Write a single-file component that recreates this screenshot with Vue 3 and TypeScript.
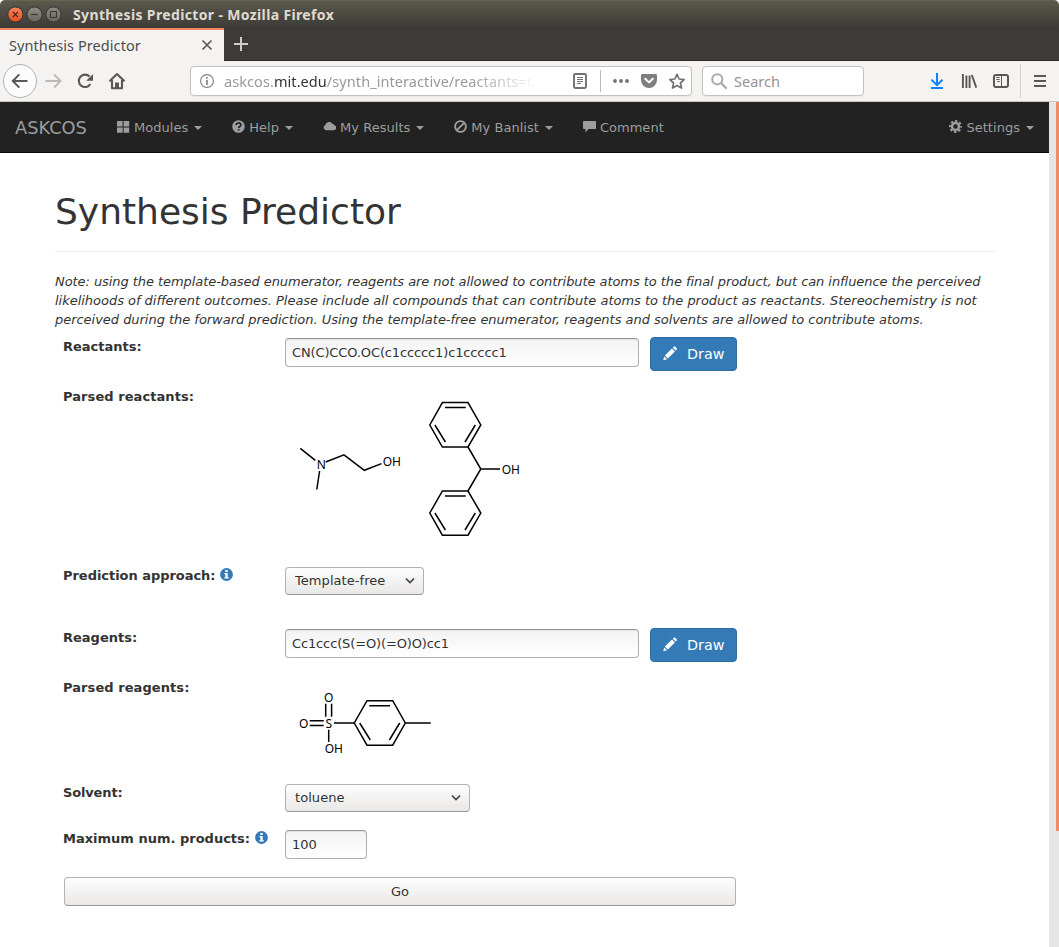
<script setup lang="ts">
import { ref } from 'vue'

type IconName = 'modules' | 'help' | 'results' | 'banlist' | 'comment'

interface NavItem {
  label: string
  icon: IconName
  menu: boolean
}

const navItems: NavItem[] = [
  { label: 'Modules', icon: 'modules', menu: true },
  { label: 'Help', icon: 'help', menu: true },
  { label: 'My Results', icon: 'results', menu: true },
  { label: 'My Banlist', icon: 'banlist', menu: true },
  { label: 'Comment', icon: 'comment', menu: false },
]

const reactants = ref<string>('CN(C)CCO.OC(c1ccccc1)c1ccccc1')
const reagents = ref<string>('Cc1ccc(S(=O)(=O)O)cc1')
const approach = ref<string>('Template-free')
const solvent = ref<string>('toluene')
const maxProducts = ref<string>('100')
</script>

<template>
  <div class="window">
    <div class="titlebar">
      <svg class="controls" width="66" height="28" viewBox="0 0 66 28">
        <defs>
          <linearGradient id="gClose" x1="0" y1="0" x2="0" y2="1">
            <stop offset="0" stop-color="#f68560" /><stop offset="1" stop-color="#df4d1f" />
          </linearGradient>
          <linearGradient id="gBtn" x1="0" y1="0" x2="0" y2="1">
            <stop offset="0" stop-color="#8f8d84" /><stop offset="1" stop-color="#67655e" />
          </linearGradient>
        </defs>
        <circle cx="15.4" cy="14.5" r="7.6" fill="url(#gClose)" stroke="#34332e" />
        <path d="M12.8 11.9l5.2 5.2M18 11.9l-5.2 5.2" stroke="#4b2415" stroke-width="1.3" />
        <circle cx="34.5" cy="14.5" r="7.6" fill="url(#gBtn)" stroke="#34332e" />
        <path d="M31 14.5h7" stroke="#3a3934" stroke-width="1.2" />
        <circle cx="53.5" cy="14.5" r="7.6" fill="url(#gBtn)" stroke="#34332e" />
        <rect x="50.5" y="11.5" width="6" height="6" fill="none" stroke="#3a3934" stroke-width="1.1" />
      </svg>
      <span class="window-title">Synthesis Predictor - Mozilla Firefox</span>
    </div>

    <div class="tabbar">
      <div class="tab">
        <span class="tab-title">Synthesis Predictor</span>
        <svg width="12" height="12" viewBox="0 0 12 12"><path d="M1.5 1.5l9 9M10.5 1.5l-9 9" stroke="#5c5b59" stroke-width="1.7" /></svg>
      </div>
      <svg class="new-tab" width="16" height="16" viewBox="0 0 16 16"><path d="M8 1v14M1 8h14" stroke="#d0cdc8" stroke-width="2" /></svg>
    </div>

    <div class="toolbar">
      <svg class="nav-buttons" width="190" height="40" viewBox="0 61 190 40" fill="none">
        <circle cx="20" cy="81" r="16.5" fill="#fcfcfc" stroke="#b3b1af" />
        <path d="M27.5 81H13M19.3 74.4L12.8 81l6.5 6.6" stroke="#595856" stroke-width="2" />
        <path d="M45.5 81h14.5M54 74.4l6.5 6.6-6.5 6.6" stroke="#bcbab8" stroke-width="2" />
        <path d="M89.5 76.5A6.2 6.2 0 1 0 90.4 84" stroke="#595856" stroke-width="2.1" />
        <path d="M93 74v6.8h-6.8z" fill="#595856" />
        <path d="M109.5 81.3l7.5-7.3 7.5 7.3M112 80v8.2h10V80" stroke="#595856" stroke-width="2.1" stroke-linejoin="round" />
        <path d="M115 88v-5.5h4V88z" fill="#595856" />
      </svg>
      <div class="urlbar">
        <svg class="info-icon" width="14" height="14" viewBox="0 0 14 14" fill="none">
          <circle cx="7" cy="7" r="6.4" stroke="#807f7d" stroke-width="1.1" />
          <path d="M7 6v5M7 3v1.8" stroke="#807f7d" stroke-width="1.6" />
        </svg>
        <span class="url">askcos.<b>mit.edu</b>/synth_interactive/reactants=C</span>
        <svg class="url-icons" width="118" height="28" viewBox="572 67 118 28" fill="none">
          <rect x="574" y="74" width="12" height="14" rx="1.2" stroke="#737271" stroke-width="1.9" />
          <path d="M577 77.5h6M577 79.5h6M577 81.5h6M577 83.5h4" stroke="#737271" stroke-width="1" />
          <path d="M600.5 70v22" stroke="#bdbbb9" />
          <circle cx="615" cy="81" r="1.9" fill="#737271" /><circle cx="621" cy="81" r="1.9" fill="#737271" /><circle cx="627" cy="81" r="1.9" fill="#737271" />
          <path d="M642.3 74h13.4q1.3 0 1.3 1.3V80a8 8 0 0 1-16 0v-4.7q0-1.3 1.3-1.3z" fill="#807f7d" />
          <path d="M645.2 78.7l3.8 3.7 3.8-3.7" stroke="#fff" stroke-width="2" stroke-linecap="round" stroke-linejoin="round" />
          <path d="M677 74.3l2.1 4.7 5.1.6-3.8 3.4 1.1 5.1-4.5-2.6-4.5 2.6 1.1-5.1-3.8-3.4 5.1-.6z" stroke="#737271" stroke-width="1.7" stroke-linejoin="round" />
        </svg>
      </div>
      <div class="searchbar">
        <svg width="17" height="17" viewBox="0 0 17 17" fill="none">
          <circle cx="6.3" cy="6.3" r="5.1" stroke="#aaa9a7" stroke-width="2" /><path d="M10 10l5.6 5.6" stroke="#aaa9a7" stroke-width="2.2" />
        </svg>
        <span>Search</span>
      </div>
      <svg class="tools" width="140" height="40" viewBox="919 61 140 40" fill="none">
        <path d="M937 73v11M931.5 79.8l5.5 5.3 5.5-5.3" stroke="#0a84ff" stroke-width="2" />
        <path d="M931 88h12" stroke="#0a84ff" stroke-width="2" />
        <path d="M962.9 74v14M966.4 75.5v12.5M969.6 75.5v12.5M971.8 75l4.5 12.6" stroke="#595856" stroke-width="1.9" />
        <rect x="994" y="75" width="14" height="12" rx="2" stroke="#595856" stroke-width="2" />
        <path d="M1001.5 75v12" stroke="#595856" /><path d="M996.3 77.5h3.4M996.3 79.5h3.4M997.3 81.5h2.4" stroke="#595856" />
        <path d="M1020.5 64v34" stroke="#d3d2d0" />
        <path d="M1034 76h12M1034 81h12M1034 86h12" stroke="#595856" stroke-width="2" />
      </svg>
    </div>

    <div class="viewport">
      <div class="page">
        <nav class="navbar">
          <a class="brand">ASKCOS</a>
          <a v-for="item in navItems" :key="item.label" class="nav-link">
            <svg class="nav-icon" width="13" height="13" viewBox="0 0 13 13" fill="currentColor">
              <path v-if="item.icon === 'modules'" d="M0 1h5.6v5.4H0zM6.6 1h5.6v5.4H6.6zM0 7.4h5.6v5.4H0zM6.6 7.4h5.6v5.4H6.6z" />
              <template v-else-if="item.icon === 'help'">
                <circle cx="6.5" cy="6.5" r="6.3" />
                <path d="M4.2 5.1C4.2 2.3 8.9 2.3 8.9 4.9 8.9 6.5 6.7 6.5 6.7 8M6.7 8.9v1.6" fill="none" stroke="#222" stroke-width="1.7" />
              </template>
              <path v-else-if="item.icon === 'results'" d="M2.9 10.3a2.8 2.8 0 0 1-.6-5.3A4 4 0 0 1 9.6 3.9a2.5 2.5 0 0 1 2.2 1.5 2.6 2.6 0 0 1-.9 4.9z" />
              <template v-else-if="item.icon === 'banlist'">
                <circle cx="6.5" cy="6.5" r="5.4" fill="none" stroke="currentColor" stroke-width="1.9" />
                <path d="M2.8 10.2l7.4-7.4" stroke="currentColor" stroke-width="1.9" />
              </template>
              <path v-else d="M.8 1h11.4q.8 0 .8.8v6.4q0 .8-.8.8H5.6l-3.1 3.5V9H.8Q0 9 0 8.2V1.8Q0 1 .8 1z" />
            </svg>
            <span>{{ item.label }}</span>
            <i v-if="item.menu" class="caret"></i>
          </a>
          <a class="nav-link settings">
            <svg class="nav-icon" width="13" height="13" viewBox="0 0 13 13" fill="none" stroke="currentColor">
              <circle cx="6.5" cy="6.5" r="3.5" stroke-width="2.5" />
              <circle cx="6.5" cy="6.5" r="5.4" stroke-width="2.2" stroke-dasharray="2.32 1.92" stroke-dashoffset="1.16" />
            </svg>
            <span>Settings</span>
            <i class="caret"></i>
          </a>
        </nav>

        <main class="container">
          <h1>Synthesis Predictor</h1>
          <p class="note">
            <span class="line-1">Note: using the template-based enumerator, reagents are not allowed to contribute atoms to the final product, but can influence the perceived</span><br />
            <span class="line-2">likelihoods of different outcomes. Please include all compounds that can contribute atoms to the product as reactants. Stereochemistry is not</span><br />
            <span class="line-3">perceived during the forward prediction. Using the template-free enumerator, reagents and solvents are allowed to contribute atoms.</span>
          </p>

          <form class="form" @submit.prevent>
            <label>Reactants:</label>
            <div class="field">
              <input v-model="reactants" class="text wide tight" type="text" />
              <button class="draw" type="button">
                <svg width="15" height="15" viewBox="0 0 15 15" fill="#fff"><path d="M.2 14.3l1-3.9 2.9 2.9zM1.9 9.6l7.1-7.1 2.9 2.9-7.1 7.1zM9.8 1.7l1-1q.7-.7 1.4 0l1.5 1.5q.7.7 0 1.4l-1 1z" /></svg>
                <span>Draw</span>
              </button>
            </div>

            <label class="parsed">Parsed reactants:</label>
            <svg class="molecule" width="260" height="160" viewBox="285 387 260 160">
              <g class="bonds">
                <path d="M300.3 448.3L315.3 460.3M325.7 462L344 454.9 364.3 470.3 381.5 463.6M319.6 471L316.8 489.5" />
                <path d="M442.4 402.6H468L480.8 425 468 447H442.4L429.8 425zM445 407.6h20.7M434.9 425l10.5 17M475.3 425l-10.3 17" />
                <path d="M468 447L480.8 469 468 491M480.8 469H500" />
                <path d="M442.4 491H468L480.8 513 468 535.2H442.4L429.8 513zM445 496h20.7M434.9 513l10.5 17M475.3 513l-10.3 17" />
              </g>
              <g class="atoms">
                <text x="321.2" y="469" text-anchor="middle">N</text>
                <text x="382.7" y="466">OH</text>
                <text x="501.7" y="474">OH</text>
              </g>
            </svg>

            <label class="compact">
              Prediction approach:
              <svg class="hint" width="13" height="13" viewBox="0 0 13 13"><circle cx="6.5" cy="6.5" r="6.4" fill="#337ab7" /><path d="M5.3 2h2.4v2H5.3zM4.4 5h3.3v4.3h1.1v1.3H4.4V9.3h1V6.3h-1z" fill="#fff" /></svg>
            </label>
            <div class="field">
              <span class="select-box approach">
                <select v-model="approach"><option>Template-free</option></select>
                <svg class="chevron" width="10" height="8" viewBox="0 0 10 8"><path d="M.9 1.5L5 5.6l4.1-4.1" fill="none" stroke="#444" stroke-width="1.7" /></svg>
              </span>
            </div>

            <label>Reagents:</label>
            <div class="field">
              <input v-model="reagents" class="text wide tight" type="text" />
              <button class="draw" type="button">
                <svg width="15" height="15" viewBox="0 0 15 15" fill="#fff"><path d="M.2 14.3l1-3.9 2.9 2.9zM1.9 9.6l7.1-7.1 2.9 2.9-7.1 7.1zM9.8 1.7l1-1q.7-.7 1.4 0l1.5 1.5q.7.7 0 1.4l-1 1z" /></svg>
                <span>Draw</span>
              </button>
            </div>

            <label class="parsed">Parsed reagents:</label>
            <svg class="molecule" width="160" height="90" viewBox="285 678 160 90">
              <g class="bonds">
                <path d="M367 700.7H392.7L405.3 723 392.7 745.2H367L354.3 723zM369.3 705.7H390M359.7 723l10.6 17M399.7 723l-10.3 17" />
                <path d="M405.3 723H430.7M334 723H354.3M325.7 703.7v13M331.6 703.7v13M309.7 720.7h14M309.7 725.6h14M328.7 729.7v12.3" />
              </g>
              <g class="atoms">
                <text x="328.6" y="702.3" text-anchor="middle">O</text>
                <text x="303.7" y="728" text-anchor="middle">O</text>
                <text x="328.7" y="728" text-anchor="middle">S</text>
                <text x="324.7" y="753">OH</text>
              </g>
            </svg>

            <label class="solvent-label">Solvent:</label>
            <div class="field">
              <span class="select-box solvent">
                <select v-model="solvent"><option>toluene</option></select>
                <svg class="chevron" width="10" height="8" viewBox="0 0 10 8"><path d="M.9 1.5L5 5.6l4.1-4.1" fill="none" stroke="#444" stroke-width="1.7" /></svg>
              </span>
            </div>

            <label>
              Maximum num. products:
              <svg class="hint" width="13" height="13" viewBox="0 0 13 13"><circle cx="6.5" cy="6.5" r="6.4" fill="#337ab7" /><path d="M5.3 2h2.4v2H5.3zM4.4 5h3.3v4.3h1.1v1.3H4.4V9.3h1V6.3h-1z" fill="#fff" /></svg>
            </label>
            <div class="field"><input v-model="maxProducts" class="text small" type="text" /></div>

            <button class="go" type="submit">Go</button>
          </form>
        </main>
      </div>
      <div class="scrollbar"><div class="thumb"></div></div>
    </div>
  </div>
</template>

<style>
html,
body {
  margin: 0;
  overflow: hidden;
}
</style>

<style scoped>
* {
  box-sizing: border-box;
}
.window {
  width: 1059px;
  height: 947px;
  display: flex;
  flex-direction: column;
  background: #fff;
  overflow: hidden;
  font-family: 'DejaVu Sans', sans-serif;
  color: #333;
}
svg {
  display: block;
  flex: none;
}
.titlebar {
  flex: none;
  height: 28px;
  display: flex;
  align-items: center;
  background: linear-gradient(#5b584c, #3d3b37);
  border-top: 1px solid #66634f;
  border-radius: 5px 5px 0 0;
}
.controls {
  margin-top: -1px;
}
.window-title {
  margin-left: 7px;
  font: bold 14px 'Noto Sans', sans-serif;
  letter-spacing: 0.36px;
  color: #dfdbd2;
  white-space: nowrap;
}
.tabbar {
  flex: none;
  height: 33px;
  display: flex;
  background: #3c3b37;
  border-bottom: 1px solid #2b2a27;
}
.tab {
  width: 224px;
  height: 33px;
  padding: 0 11px 2px 9px;
  display: flex;
  align-items: center;
  justify-content: space-between;
  background: #f4f3f1;
  border-top: 2px solid #f2855a;
  color: #4c4c4c;
}
.tab-title {
  font: 14.5px 'Noto Sans', sans-serif;
  letter-spacing: 0.08px;
  white-space: nowrap;
}
.new-tab {
  margin: 8px 0 0 9px;
}
.toolbar {
  flex: none;
  height: 41px;
  display: flex;
  align-items: center;
  background: #f4f3f1;
  border-bottom: 1px solid #c9c8c5;
  font: 14.5px 'Noto Sans', sans-serif;
}
.urlbar,
.searchbar {
  height: 30px;
  display: flex;
  align-items: center;
  background: #fff;
  border: 1px solid #c3c1be;
  border-radius: 4px;
  box-shadow: 0 1px 2px rgba(0, 0, 0, 0.05);
}
.urlbar {
  width: 502px;
  padding-left: 9px;
}
.url {
  width: 318px;
  margin-left: 10px;
  overflow: hidden;
  color: #999;
  letter-spacing: 0.07px;
  white-space: nowrap;
  mask-image: linear-gradient(90deg, #000 245px, transparent 314px);
}
.url b {
  font-weight: normal;
  color: #333;
}
.url-icons {
  margin-left: 30px;
}
.searchbar {
  width: 162px;
  margin-left: 10px;
  padding-left: 8px;
  color: #949391;
}
.searchbar span {
  margin-left: 6px;
}
.tools {
  margin-left: auto;
}
.viewport {
  flex: 1;
  min-height: 0;
  display: flex;
}
.page {
  width: 1049px;
}
.scrollbar {
  width: 10px;
  background: #e5e5e5;
}
.thumb {
  width: 3px;
  height: 729px;
  margin-left: 7px;
  background: #f08b67;
}
.navbar {
  height: 51px;
  display: flex;
  background: #222;
  border-bottom: 1px solid #080808;
  color: #9d9d9d;
  font-size: 13px;
  line-height: 19px;
}
.brand {
  width: 102px;
  padding: 16px 15px;
  font-size: 17.8px;
}
.nav-link {
  padding: 16px 15px 15px;
  display: flex;
  letter-spacing: 0.03px;
  white-space: nowrap;
}
.nav-icon {
  margin: 2px 4px 0 0;
}
.caret {
  width: 8px;
  height: 4px;
  margin: 8px 0 0 6px;
  border-top: 4px solid;
  border-left: 4px solid transparent;
  border-right: 4px solid transparent;
}
.settings {
  margin-left: auto;
}
.container {
  width: 940px;
  margin-left: 55px;
}
h1 {
  height: 99px;
  margin: 0 0 20px;
  padding-top: 39px;
  border-bottom: 1px solid #eee;
  font-size: 36px;
  font-weight: 500;
  line-height: 40px;
}
.note {
  margin: 0;
  font-size: 13px;
  font-style: italic;
  line-height: 19px;
  white-space: nowrap;
}
.line-1 {
  letter-spacing: -0.064px;
}
.line-2 {
  letter-spacing: -0.024px;
}
.line-3 {
  letter-spacing: -0.03px;
}
.form {
  width: 690px;
  margin-top: 8px;
  padding-left: 8px;
  display: grid;
  grid-template-columns: 222px 1fr;
  grid-template-rows: 50px 179px 62px 50px 105px 46px 48px 29px;
  font-size: 13px;
}
label {
  display: flex;
  height: 19px;
  font-weight: bold;
  line-height: 19px;
  white-space: nowrap;
}
.parsed {
  letter-spacing: 0.07px;
}
.compact {
  letter-spacing: -0.04px;
}
.solvent-label {
  letter-spacing: -0.15px;
}
.hint {
  margin: 2px 0 0 5px;
}
.field {
  display: flex;
  align-items: flex-start;
}
.text {
  height: 29px;
  margin-top: 1px;
  padding: 0 6px;
  border: 1px solid #b0aeab;
  border-top-color: #979593;
  border-radius: 4px;
  background: linear-gradient(#f3f3f3, #fff);
  box-shadow: inset 0 1px 1px rgba(0, 0, 0, 0.07);
  color: #333;
  font: 13px 'DejaVu Sans', sans-serif;
}
.wide {
  width: 354px;
}
.tight {
  letter-spacing: -0.13px;
}
.small {
  width: 82px;
}
.draw {
  width: 87px;
  height: 34px;
  margin-left: 11px;
  padding: 0 0 0 12px;
  display: flex;
  align-items: center;
  background: #337ab7;
  border: 1px solid #2e6da4;
  border-radius: 4px;
  color: #fff;
  font: 14.3px 'DejaVu Sans', sans-serif;
}
.draw svg {
  margin-top: -2px;
}
.draw span {
  margin-left: 9px;
}
.select-box {
  display: flex;
  position: relative;
  height: 28px;
  margin-top: 1px;
}
.approach {
  width: 139px;
}
.solvent {
  width: 185px;
}
select {
  width: 100%;
  padding: 0 9px 2px;
  appearance: none;
  border: 1px solid #b4b2af;
  border-bottom-color: #999795;
  border-radius: 4px;
  background: linear-gradient(#fdfdfd, #e9e8e7);
  color: #333;
  font: 13px 'DejaVu Sans', sans-serif;
  letter-spacing: 0.06px;
}
.chevron {
  position: absolute;
  right: 9px;
  top: 10px;
}
.go {
  width: 672px;
  height: 29px;
  margin-left: 1px;
  padding: 0;
  grid-column: 1 / -1;
  border: 1px solid #b4b2af;
  border-bottom-color: #999795;
  border-radius: 4px;
  background: linear-gradient(#fdfdfd, #e9e8e7);
  color: #333;
  font: 13px 'DejaVu Sans', sans-serif;
}
.bonds {
  fill: none;
  stroke: #000;
  stroke-width: 1.5;
}
.atoms {
  fill: #000;
  font: 12px 'Noto Sans', sans-serif;
}
</style>
